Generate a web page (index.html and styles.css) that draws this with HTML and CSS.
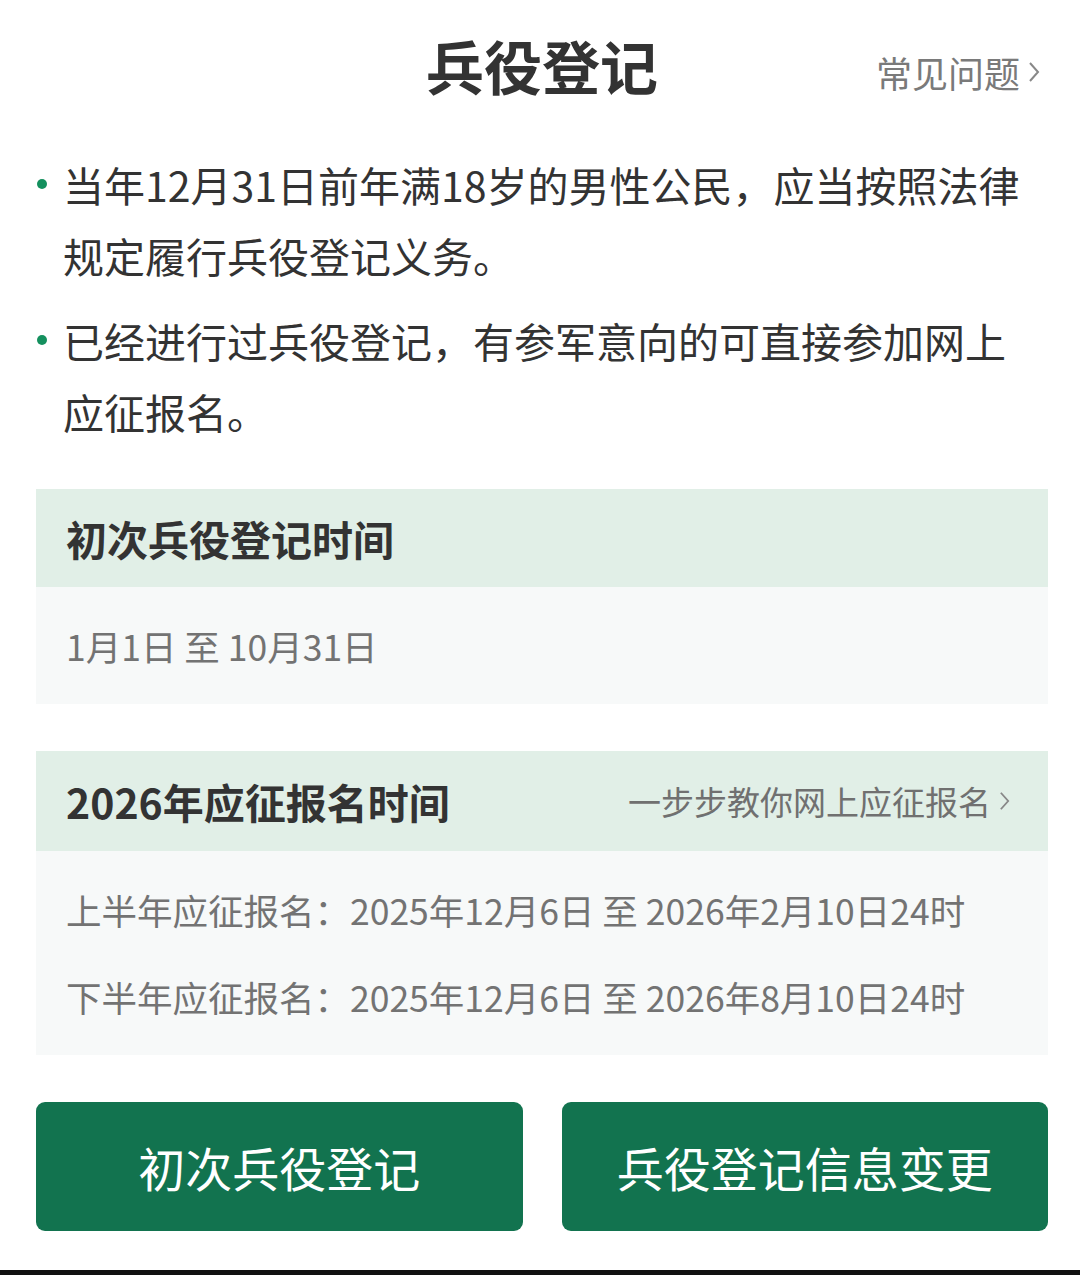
FILE: index.html
```html
<!DOCTYPE html>
<html lang="zh-CN">
<head>
<meta charset="utf-8">
<title>兵役登记</title>
<link rel="stylesheet" href="styles.css">
</head>
<body>
<div class="page">
  <header class="top">
    <div></div>
    <h1 class="title">兵役登记</h1>
    <a class="faq">常见问题<svg class="chev" viewBox="0 0 12 24" width="12" height="24"><polyline points="2,3 10,12 2,21" fill="none" stroke="#888" stroke-width="2"/></svg></a>
  </header>

  <ul class="notes">
    <li><span class="dot"></span><span class="note-text">当年12月31日前年满18岁的男性公民，应当按照法律规定履行兵役登记义务。</span></li>
    <li><span class="dot"></span><span class="note-text">已经进行过兵役登记，有参军意向的可直接参加网上应征报名。</span></li>
  </ul>

  <section class="card first">
    <div class="card-head"><span class="card-title">初次兵役登记时间</span></div>
    <div class="card-body">
      <div class="row">1月1日 至 10月31日</div>
    </div>
  </section>

  <section class="card second">
    <div class="card-head">
      <span class="card-title">2026年应征报名时间</span>
      <a class="guide">一步步教你网上应征报名<svg class="chev small" viewBox="0 0 12 24" width="11" height="22"><polyline points="2,3 10,12 2,21" fill="none" stroke="#888" stroke-width="2"/></svg></a>
    </div>
    <div class="card-body">
      <div class="row">上半年应征报名：2025年12月6日 至 2026年2月10日24时</div>
      <div class="row">下半年应征报名：2025年12月6日 至 2026年8月10日24时</div>
    </div>
  </section>

  <div class="actions">
    <button class="btn">初次兵役登记</button>
    <button class="btn">兵役登记信息变更</button>
  </div>
</div>
<div class="bottom-bar"></div>
</body>
</html>
```
FILE: styles.css
```css
* { box-sizing: border-box; }
html, body {
  margin: 0;
  padding: 0;
  background: #ffffff;
}
body {
  font-family: "Noto Sans CJK SC", "Noto Sans", "Liberation Sans", sans-serif;
  color: #333333;
  width: 1080px;
  height: 1275px;
  overflow: hidden;
}
.page {
  padding: 0 32px 0 36px;
}
.top {
  display: grid;
  grid-template-columns: 1fr auto 1fr;
  align-items: center;
  height: 130px;
}
.title {
  margin: 0;
  font-size: 58px;
  font-weight: 700;
  color: #333333;
  line-height: 1;
}
.faq {
  justify-self: end;
  display: flex;
  align-items: center;
  gap: 8px;
  margin-right: 8px;
  margin-top: 14px;
  font-size: 36px;
  color: #7a7a7a;
  line-height: 1;
}
.chev { display: block; }
.notes {
  list-style: none;
  margin: 19px 0 0 0;
  padding: 0 16px 0 0;
}
.notes li {
  display: flex;
  gap: 16px;
  font-size: 41px;
  line-height: 71px;
  color: #333333;
}
.notes li + li { margin-top: 14px; }
.dot {
  flex: none;
  width: 10px;
  height: 10px;
  margin-top: 30px;
  margin-left: 1px;
  border-radius: 50%;
  background: #14905e;
}
.note-text { flex: 1; }
.card.first { margin-top: 42px; }
.card.second { margin-top: 47px; }
.card-head {
  display: flex;
  align-items: center;
  justify-content: space-between;
  height: 98px;
  padding: 0 38px 0 30px;
  background: #e1efe7;
}
.card.second .card-head { height: 100px; }
.card-title {
  font-size: 41px;
  font-weight: 700;
  color: #333333;
}
.guide {
  display: flex;
  align-items: center;
  gap: 8px;
  font-size: 33px;
  color: #707070;
}
.card-body {
  background: #f7f9f9;
  padding: 15px 30px;
}
.row {
  font-size: 35.5px;
  line-height: 87px;
  color: #737373;
}
.actions {
  display: grid;
  grid-template-columns: 1fr 1fr;
  gap: 39px;
  margin-top: 47px;
}
.btn {
  height: 129px;
  border: none;
  border-radius: 9px;
  background: #12734f;
  color: #ffffff;
  font-family: "Noto Sans CJK SC", "Noto Sans", sans-serif;
  font-size: 47px;
  font-weight: 400;
}
.bottom-bar {
  margin-top: 39px;
  height: 5px;
  background: #111111;
}
```
